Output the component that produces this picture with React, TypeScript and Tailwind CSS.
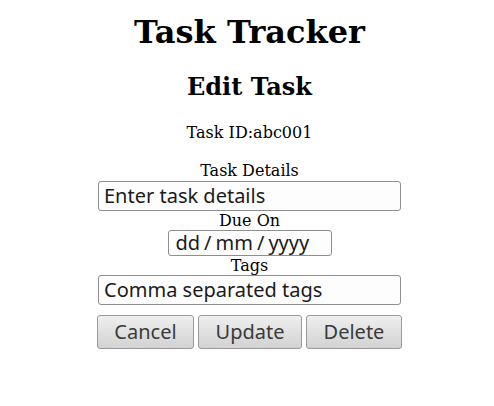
export default function App() {
  return (
    <div className="flex min-h-[406px] flex-col items-center bg-white pl-[5px] text-black [font-family:'DejaVu_Serif',serif]">
      <h1 className="mt-[14px] text-[32px] font-bold leading-[37px]">Task Tracker</h1>
      <h2 className="mt-[22px] text-[24px] font-bold leading-[28px]">Edit Task</h2>
      <p className="mt-[22px] text-[16px] leading-[19px]">Task ID:abc001</p>
      <form className="mt-[19px] flex flex-col items-center">
        <label className="text-[16px] leading-[20px]">Task Details</label>
        <input
          type="text"
          placeholder="Enter task details"
          className="h-[30px] w-[303px] rounded-[3px] border border-[#8f8f8f] bg-[#fdfdfd] px-[5px] text-[20px] text-[#1b1b1b] placeholder:text-[#1b1b1b] [font-family:'Noto_Sans',sans-serif] outline-none"
        />
        <label className="text-[16px] leading-[19px]">Due On</label>
        <div className="flex h-[26px] w-[164px] items-center rounded-[3px] border border-[#8f8f8f] bg-[#fdfdfd] px-[7px] text-[20px] text-[#1b1b1b] [font-family:'Noto_Sans',sans-serif]">
          <span>dd</span>
          <span className="px-[4px]">/</span>
          <span>mm</span>
          <span className="px-[4px]">/</span>
          <span>yyyy</span>
        </div>
        <label className="text-[16px] leading-[19px]">Tags</label>
        <input
          type="text"
          placeholder="Comma separated tags"
          className="h-[30px] w-[303px] rounded-[3px] border border-[#8f8f8f] bg-[#fdfdfd] px-[5px] text-[20px] text-[#1b1b1b] placeholder:text-[#1b1b1b] [font-family:'Noto_Sans',sans-serif] outline-none"
        />
        <div className="mt-[10px] flex gap-[4px]">
          <button
            type="button"
            className="h-[34px] w-[97px] rounded-[3px] border border-[#9a9a9a] bg-gradient-to-b from-[#efefef] to-[#d2d2d2] text-[20px] text-[#3a3a3a] [font-family:'Noto_Sans',sans-serif]"
          >
            Cancel
          </button>
          <button
            type="button"
            className="h-[34px] w-[104px] rounded-[3px] border border-[#9a9a9a] bg-gradient-to-b from-[#efefef] to-[#d2d2d2] text-[20px] text-[#3a3a3a] [font-family:'Noto_Sans',sans-serif]"
          >
            Update
          </button>
          <button
            type="button"
            className="h-[34px] w-[96px] rounded-[3px] border border-[#9a9a9a] bg-gradient-to-b from-[#efefef] to-[#d2d2d2] text-[20px] text-[#3a3a3a] [font-family:'Noto_Sans',sans-serif]"
          >
            Delete
          </button>
        </div>
      </form>
    </div>
  );
}
